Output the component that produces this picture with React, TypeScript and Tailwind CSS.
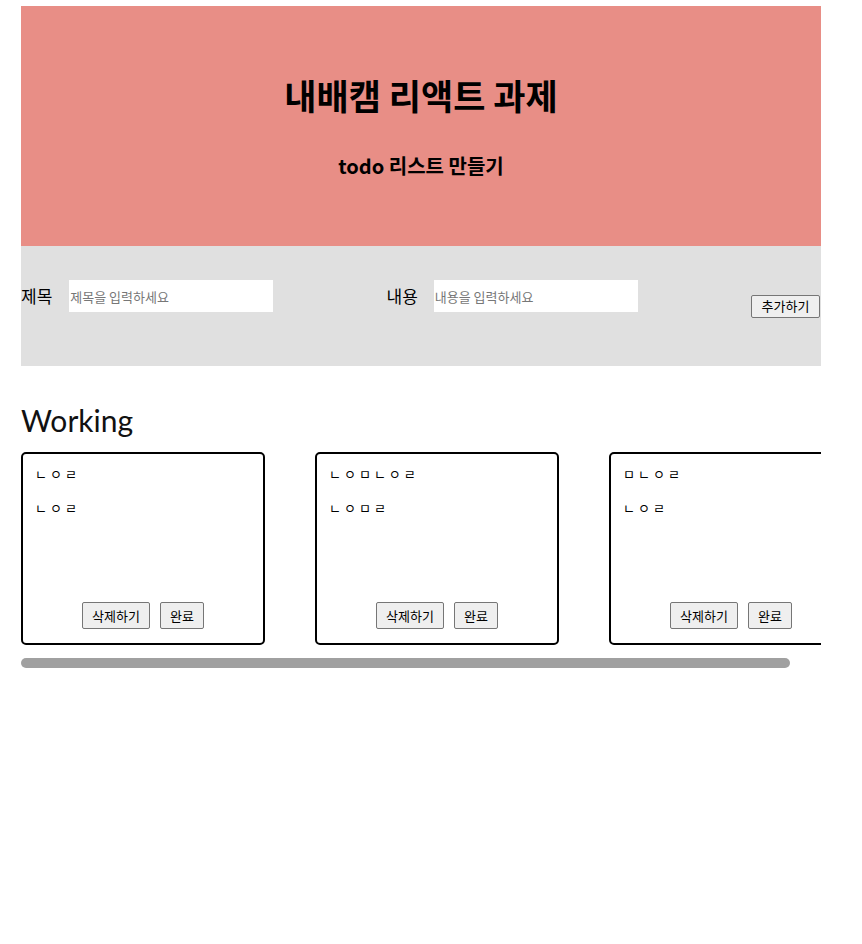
import React from "react";

const cards = [
  { title: "ㄴㅇㄹ", body: "ㄴㅇㄹ" },
  { title: "ㄴㅇㅁㄴㅇㄹ", body: "ㄴㅇㅁㄹ" },
  { title: "ㅁㄴㅇㄹ", body: "ㄴㅇㄹ" },
];

const kr = "font-['Malgun_Gothic','Noto_Sans_CJK_KR',sans-serif]";

export default function App() {
  return (
    <div className={`min-h-[944px] bg-white pt-[6px] ${kr} text-black`}>
      <div className="mx-[21px] w-[800px]">
        <header className="flex h-[240px] flex-col items-center bg-[#e88e86] pt-[67px]">
          <h1 className="text-[35px] font-bold leading-[44px]">내배캠 리액트 과제</h1>
          <h3 className="mt-[36px] text-[20px] font-bold leading-[26px]">todo 리스트 만들기</h3>
        </header>
        <section className="flex h-[120px] items-center justify-between bg-[#e0e0e0]">
          <div className="mb-[20px] flex items-center gap-[17px]">
            <span className="text-[17px] leading-[32px]">제목</span>
            <input
              className="h-[32px] w-[204px] bg-white px-[1px] text-[13px] outline-none placeholder:text-[#777]"
              placeholder="제목을 입력하세요"
            />
          </div>
          <div className="mb-[20px] flex items-center gap-[16px]">
            <span className="text-[17px] leading-[32px]">내용</span>
            <input
              className="h-[32px] w-[204px] bg-white px-[1px] text-[13px] outline-none placeholder:text-[#777]"
              placeholder="내용을 입력하세요"
            />
          </div>
          <button className="mr-[1px] h-[23px] w-[69px] rounded-[2px] border border-[#767676] bg-[#efefef] text-[13px] leading-[20px]">
            추가하기
          </button>
        </section>
        <h2 className="mt-[34px] font-['Lato','Noto_Sans',sans-serif] text-[30px] leading-[40px] text-[#111]">
          Working
        </h2>
        <div className="mt-[12px] flex gap-[50px] overflow-hidden">
          {cards.map((c, i) => (
            <div
              key={i}
              className="flex h-[193px] w-[244px] shrink-0 flex-col justify-between rounded-[5px] border-2 border-black px-[12px] pb-[14px] pt-[11px]"
            >
              <div className="flex flex-col gap-[16px] text-[13px] leading-[18px] tracking-[3px]">
                <div>{c.title}</div>
                <div>{c.body}</div>
              </div>
              <div className="flex justify-center gap-[10px]">
                <button className="h-[27px] rounded-[2px] border border-[#767676] bg-[#efefef] px-[9px] text-[13px]">
                  삭제하기
                </button>
                <button className="h-[27px] rounded-[2px] border border-[#767676] bg-[#efefef] px-[9px] text-[13px]">
                  완료
                </button>
              </div>
            </div>
          ))}
        </div>
        <div className="mt-[13px] h-[10px] w-[769px] rounded-full bg-[#a0a0a0]" />
      </div>
    </div>
  );
}
